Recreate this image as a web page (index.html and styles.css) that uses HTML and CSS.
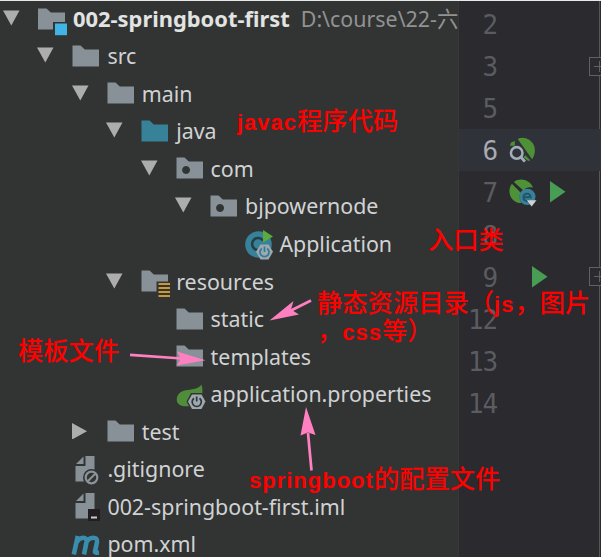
FILE: index.html
```
<!DOCTYPE html>
<html lang="zh-CN">
<head>
<meta charset="utf-8">
<title>002-springboot-first</title>
<link rel="stylesheet" href="styles.css">
</head>
<body>
<svg class="defs" width="0" height="0">
  <symbol id="open" viewBox="0 0 17 16"><path d="M0 .5H16.500L8.300 15.500Z" fill="#adadad"/></symbol>
  <symbol id="closed" viewBox="0 0 17 16"><path d="M0 0V16.500L15 8.300Z" fill="#adadad"/></symbol>
  <symbol id="folder" viewBox="0 0 30 30"><path d="M.5 3.500H8.500L12.800 7.600H27V24.500H.5Z"/></symbol>
  <symbol id="package" viewBox="0 0 30 30"><path fill-rule="evenodd" d="M.5 3.500H8.500L12.800 7.600H27V24.500H.5ZM10 12a4 4 0 1 0 .1 0Z"/></symbol>
</svg>
<div class="ide">
  <div class="tree">
    <div class="row d0"><svg class="arrow"><use href="#open"/></svg><svg class="icon" viewBox="0 0 30 30"><path d="M0 3.500H8.500L12.800 7.600H27V17H15V24.500H0Z"/><path fill="#3fb4e5" d="M17 18.500h12v11.700H17z"/></svg><span class="name root">002-springboot-first</span><span class="path">D:\course\22-六</span></div>
    <div class="row d1"><svg class="arrow"><use href="#open"/></svg><svg class="icon"><use href="#folder"/></svg><span class="name">src</span></div>
    <div class="row d2"><svg class="arrow"><use href="#open"/></svg><svg class="icon"><use href="#folder"/></svg><span class="name">main</span></div>
    <div class="row d3"><svg class="arrow"><use href="#open"/></svg><svg class="icon source"><use href="#folder"/></svg><span class="name">java</span></div>
    <div class="row d4"><svg class="arrow"><use href="#open"/></svg><svg class="icon"><use href="#package"/></svg><span class="name">com</span></div>
    <div class="row d5"><svg class="arrow"><use href="#open"/></svg><svg class="icon"><use href="#package"/></svg><span class="name">bjpowernode</span></div>
    <div class="row d6"><span class="arrow"></span><svg class="icon" viewBox="0 0 30 30"><circle cx="14.500" cy="14.500" r="13.300" fill="#378199"/><path d="M19 10.500a6 6 0 1 0 0 7" fill="none" stroke="#243d47" stroke-width="2.500"/><path d="M19 0V12.500L29 6.500Z" fill="#59ad3f"/><path d="M16.500 14.500h8l4.500 7.300-4.500 7.700h-8L12 21.800Z" fill="#9da8af"/><path d="M17.800 18.500a4.500 4.500 0 1 0 5.400 0M20.500 16.500v5.500" fill="none" stroke="#2d7c98" stroke-width="1.700"/></svg><span class="name">Application</span></div>
    <div class="row d3"><svg class="arrow"><use href="#open"/></svg><svg class="icon" viewBox="0 0 30 30"><path d="M.5 3.500H8.500L12.800 7.600H27V14.500H15.500V24.500H.5Z"/><path d="M17.500 17h11.500M17.500 21h11.500M17.500 25h11.500M17.500 29h11.500" stroke="#cc9837" stroke-width="2"/></svg><span class="name">resources</span></div>
    <div class="row d4"><span class="arrow"></span><svg class="icon"><use href="#folder"/></svg><span class="name">static</span></div>
    <div class="row d4"><span class="arrow"></span><svg class="icon"><use href="#folder"/></svg><span class="name">templates</span></div>
    <div class="row d4"><span class="arrow"></span><svg class="icon" viewBox="0 0 30 30"><path d="M25.500 4.500C28 12 26 23 16 25.500 11 27 5 26.500 2.500 24-1 20 1 13 7 11 14 9 22 10 25.500 4.500Z" fill="#4f8d3a"/><path d="M15 13h11l5 8.500-5 8.500H15l-4.500-8.500Z" fill="#323433"/><path d="M16 14.500h9.500l4 7-4 7.500H16l-4-7.500Z" fill="#9da8af"/><path d="M18 18.200a4.600 4.600 0 1 0 5.500 0M20.700 16.500v5" fill="none" stroke="#303536" stroke-width="1.700"/></svg><span class="name">application.properties</span></div>
    <div class="row d2"><svg class="arrow"><use href="#closed"/></svg><svg class="icon"><use href="#folder"/></svg><span class="name">test</span></div>
    <div class="row d1"><span class="arrow"></span><svg class="icon" viewBox="0 0 30 30"><path d="M13.500 1H22.500V26.500H3.500V11H13.500ZM11.500 1.500V9H4Z"/><circle cx="19.500" cy="22.500" r="8.500" fill="#323433"/><circle cx="19.500" cy="22.500" r="5.800" fill="none" stroke="#8a9399" stroke-width="2.200"/><path d="M15.500 26.500l8-8" stroke="#8a9399" stroke-width="2"/></svg><span class="name">.gitignore</span></div>
    <div class="row d1"><span class="arrow"></span><svg class="icon" viewBox="0 0 30 30"><path d="M13.500 1H22.500V26.500H3.500V11H13.500ZM11.500 1.500V9H4Z"/><path d="M16 17h12v12H16z" fill="#231f20"/><path d="M19 25.500h6" stroke="#ccc" stroke-width="2"/></svg><span class="name">002-springboot-first.iml</span></div>
    <div class="row d1"><span class="arrow"></span><svg class="icon" viewBox="0 0 30 30"><path d="M1.800 24.500 5.800 6M4.800 12C8 6.500 15.500 6 14.500 12L12 24.500M14.300 12C17.500 6.500 26 6 25 12L23 21.500Q22.800 23 27 22.500" fill="none" stroke="#398eae" stroke-width="4.600"/></svg><span class="name">pom.xml</span></div>
  </div>
  <div class="gutter">
    <div class="line"><span class="num">2</span></div>
    <div class="line"><span class="num">3</span><span class="fold"></span></div>
    <div class="line"><span class="num">5</span></div>
    <div class="line current"><span class="num">6</span><svg class="mark" viewBox="0 0 28 28"><path d="M9 2C15-1 23 2 26 9c2 6 0 11-2 14Z M2 6l4-2v5H1Z M15 21l2-2 5 5-2 1Z" fill="#4f9137"/><circle cx="8" cy="16.500" r="6" fill="#2f3239" stroke="#a4adb8" stroke-width="2.600"/><path d="M12.500 21l4 4.500" stroke="#a4adb8" stroke-width="3"/></svg></div>
    <div class="line"><span class="num">7</span><svg class="mark" viewBox="0 0 28 28"><path d="M5 3C12-2 22 1 25 9c-4-1-8 0-10 3ZM3 5l9 9c-2 4-1 8 1 11C2 25-3 13 3 5Z" fill="#4f9137"/><circle cx="19" cy="18.500" r="8.500" fill="#378199"/><path d="M15.500 19h7a3.800 3.800 0 1 0-1.500 3" fill="none" stroke="#24536a" stroke-width="2"/><path d="M18.500 22h10L23.500 28.500Z" fill="#d0d0d0"/></svg><svg class="run" viewBox="0 0 16 22"><path d="M0 0V21.500L15.500 10.700Z" fill="#499c54"/></svg></div>
    <div class="line"><span class="num">8</span></div>
    <div class="line"><span class="num">9</span><svg class="run solo" viewBox="0 0 16 22"><path d="M0 0V21.500L15.500 10.700Z" fill="#499c54"/></svg><span class="fold"></span></div>
    <div class="line"><span class="num">12</span></div>
    <div class="line"><span class="num">13</span></div>
    <div class="line"><span class="num">14</span></div>
  </div>
  <svg class="pointers" viewBox="0 0 601 557" fill="#ff80c0" stroke="#ff80c0">
    <path d="M130 354.800 182 358.500" stroke-width="2.700"/><path stroke="none" d="M205.500 360.300 177 351.500 181 358.500 176.500 365.500Z"/>
    <path d="M311 300.500 289 311.500" stroke-width="2.700"/><path stroke="none" d="M269.500 320.500 293.500 301 291 309.500 299 314.500Z"/>
    <path d="M311.500 470.500 308 433" stroke-width="2.700"/><path stroke="none" d="M306 407 315.500 435 308 432.500 300.500 435.500Z"/>
  </svg>
  <div class="note java">javac<b>程序代码</b></div>
  <div class="note entry"><b>入口类</b></div>
  <div class="note static"><b>静态资源目录（</b>js<b>，图片</b><br><b>，</b>css<b>等）</b></div>
  <div class="note template"><b>模板文件</b></div>
  <div class="note config">springboot<b>的配置文件</b></div>
</div>
</body>
</html>
```
FILE: styles.css
```
* { box-sizing: border-box; }
body { margin: 0; background: #323433; overflow: hidden; }
.defs { position: absolute; }
.ide {
  position: relative;
  display: grid;
  grid-template-columns: 458px 143px;
  width: 601px;
  height: 557px;
  overflow: hidden;
  border-top: 1px solid #e8e8e8;
}
.tree { overflow: hidden; background: #323433; font-family: "Noto Sans", "Noto Sans CJK SC", sans-serif; }
.row {
  display: flex;
  align-items: center;
  height: 37.550px;
  padding-left: calc(3px + var(--depth) * 34.4px);
  white-space: nowrap;
}
.row:first-child { height: 37px; }
.d0 { --depth: 0; }
.d1 { --depth: 1; }
.d2 { --depth: 2; }
.d3 { --depth: 3; }
.d4 { --depth: 4; }
.d5 { --depth: 5; }
.d6 { --depth: 6; }
.arrow { flex: none; width: 17px; height: 16px; margin: 0 18px 3px 0; }
.icon { flex: none; width: 30px; height: 30px; fill: #879197; overflow: visible; }
.source { fill: #378199; }
.name { margin-left: 5px; font-size: 21.400px; line-height: 28px; margin-bottom: 1px; color: #d0d2d3; }
.root { font-weight: 700; font-size: 21.900px; color: #e2e3e3; }
.path { margin-left: 11px; font-size: 21.400px; line-height: 28px; margin-bottom: 1px; color: #929292; }
.gutter {
  position: relative;
  padding-top: 2px;
  background: linear-gradient(#55565a, #55565a) 140px 0 / 1px 100% no-repeat, #2a2a2f;
  border-left: 1px solid #37373b;
}
.line { display: flex; align-items: center; height: 42.1px; position: relative; }
.current { background: #2f3239; }
.num {
  width: 38px;
  padding-top: 2px;
  text-align: right;
  font: 26px/42px "DejaVu Sans Mono", monospace;
  letter-spacing: -1.2px;
  color: #5a5c60;
}
.current .num { color: #a9abb0; }
.mark { width: 27px; height: 27px; margin-left: 12px; overflow: visible; }
.run { width: 16px; height: 22px; margin-left: 14px; }
.solo { margin-left: 35px; }
.fold {
  width: 20px;
  height: 19px;
  margin-left: auto;
  margin-right: -8px;
  border: 1px solid #606165;
  background: linear-gradient(#606165, #606165) 50% 50% / 11px 1px no-repeat, linear-gradient(#606165, #606165) 50% 50% / 1px 11px no-repeat, #2a2a2f;
}
.pointers { position: absolute; left: 0; top: -1px; width: 601px; height: 557px; }
.note {
  position: absolute;
  color: #f00;
  white-space: nowrap;
  font: 700 22px/28px "Liberation Sans", sans-serif;
  letter-spacing: 1px;
}
.note b { font: 500 25.300px/1 "Noto Sans CJK SC", sans-serif; line-height: 0; letter-spacing: 0; }
.java { left: 237px; top: 108px; }
.entry { left: 428px; top: 227px; }
.static { left: 317px; top: 290px; }
.template { left: 18px; top: 338px; }
.config { left: 249px; top: 466px; }
```
